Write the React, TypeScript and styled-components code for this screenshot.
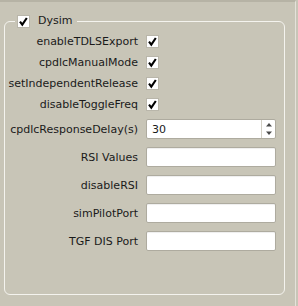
import React from "react";
import styled, { createGlobalStyle } from "styled-components";

const GlobalStyle = createGlobalStyle`
  html, body {
    margin: 0;
    padding: 0;
    background: #c8c5b7;
  }
  body {
    font-family: "DejaVu Sans", "Liberation Sans", sans-serif;
    font-size: 11px;
    color: #1a1a1a;
  }
`;

const Page = styled.div`
  width: 298px;
  height: 306px;
  overflow: hidden;
  background: #c8c5b7;
`;

const Panel = styled.div`
  box-sizing: border-box;
  width: 296px;
  height: 306px;
  border-top: 2px solid #b6b3a5;
  border-right: 1px solid #e4e2da;
  padding: 12px 0 0 4px;
`;

const GroupBox = styled.fieldset`
  box-sizing: border-box;
  width: 281px;
  margin: 0;
  padding: 0 0 43px 0;
  border: 1px solid #f4f3ee;
  border-radius: 6px;
  min-width: 0;
`;

const Title = styled.legend`
  display: flex;
  align-items: center;
  gap: 8px;
  height: 14px;
  margin-left: 10px;
  padding: 0 5px 0 2px;
  font-size: 11px;
  line-height: 14px;
`;

const Form = styled.div`
  display: grid;
  grid-template-columns: 132px 130px;
  column-gap: 8px;
  row-gap: 8px;
  align-items: center;
  padding: 7px 0 0 1px;
`;

const Label = styled.label`
  justify-self: end;
  white-space: nowrap;
  line-height: 13px;
`;

const Box = styled.span`
  box-sizing: border-box;
  display: inline-flex;
  align-items: center;
  justify-content: center;
  width: 13px;
  height: 13px;
  background: #ffffff;
  border: 1px solid #b9b6aa;
  justify-self: start;
`;

const Field = styled.input`
  box-sizing: border-box;
  width: 130px;
  height: 20px;
  margin: 0;
  padding: 0 5px;
  border: 1px solid #aeab9f;
  border-radius: 2px;
  background: #ffffff;
  box-shadow: inset 0 1px 1px rgba(0, 0, 0, 0.07);
  font-family: inherit;
  font-size: 11px;
  color: #1a1a1a;
  outline: none;
`;

const Spin = styled.div`
  box-sizing: border-box;
  display: flex;
  width: 130px;
  height: 20px;
  border: 1px solid #aeab9f;
  border-radius: 2px;
  background: #ffffff;
  overflow: hidden;
`;

const SpinInput = styled.input`
  flex: 1;
  min-width: 0;
  margin: 0;
  padding: 0 5px;
  border: none;
  background: transparent;
  font-family: inherit;
  font-size: 11px;
  color: #1a1a1a;
  outline: none;
`;

const SpinButtons = styled.div`
  width: 13px;
  border-left: 1px solid #d2cfc4;
  display: flex;
  align-items: center;
  justify-content: center;
`;

const Check = () => (
  <Box>
    <svg width="11" height="11" viewBox="0 0 11 11">
      <path d="M2 5.6 L4.3 8.6 L8.8 2" fill="none" stroke="#000" strokeWidth="2.1" />
    </svg>
  </Box>
);

const CHECK_ROWS = [
  "enableTDLSExport",
  "cpdlcManualMode",
  "setIndependentRelease",
  "disableToggleFreq",
];

const TEXT_ROWS = ["RSI Values", "disableRSI", "simPilotPort", "TGF DIS Port"];

const App = () => {
  return (
    <Page>
      <GlobalStyle />
      <Panel>
        <GroupBox>
          <Title>
            <Check />
            <span>Dysim</span>
          </Title>
          <Form>
            {CHECK_ROWS.map((name) => (
              <React.Fragment key={name}>
                <Label>{name}</Label>
                <Check />
              </React.Fragment>
            ))}
            <Label>cpdlcResponseDelay(s)</Label>
            <Spin>
              <SpinInput defaultValue="30" />
              <SpinButtons>
                <svg width="12" height="18" viewBox="0 0 12 18">
                  <path d="M3 6.5 L6 3 L9 6.5 Z" fill="#4a4a4a" />
                  <path d="M3 11.5 L6 15 L9 11.5 Z" fill="#4a4a4a" />
                </svg>
              </SpinButtons>
            </Spin>
            {TEXT_ROWS.map((name) => (
              <React.Fragment key={name}>
                <Label>{name}</Label>
                <Field />
              </React.Fragment>
            ))}
          </Form>
        </GroupBox>
      </Panel>
    </Page>
  );
};

export default App;
